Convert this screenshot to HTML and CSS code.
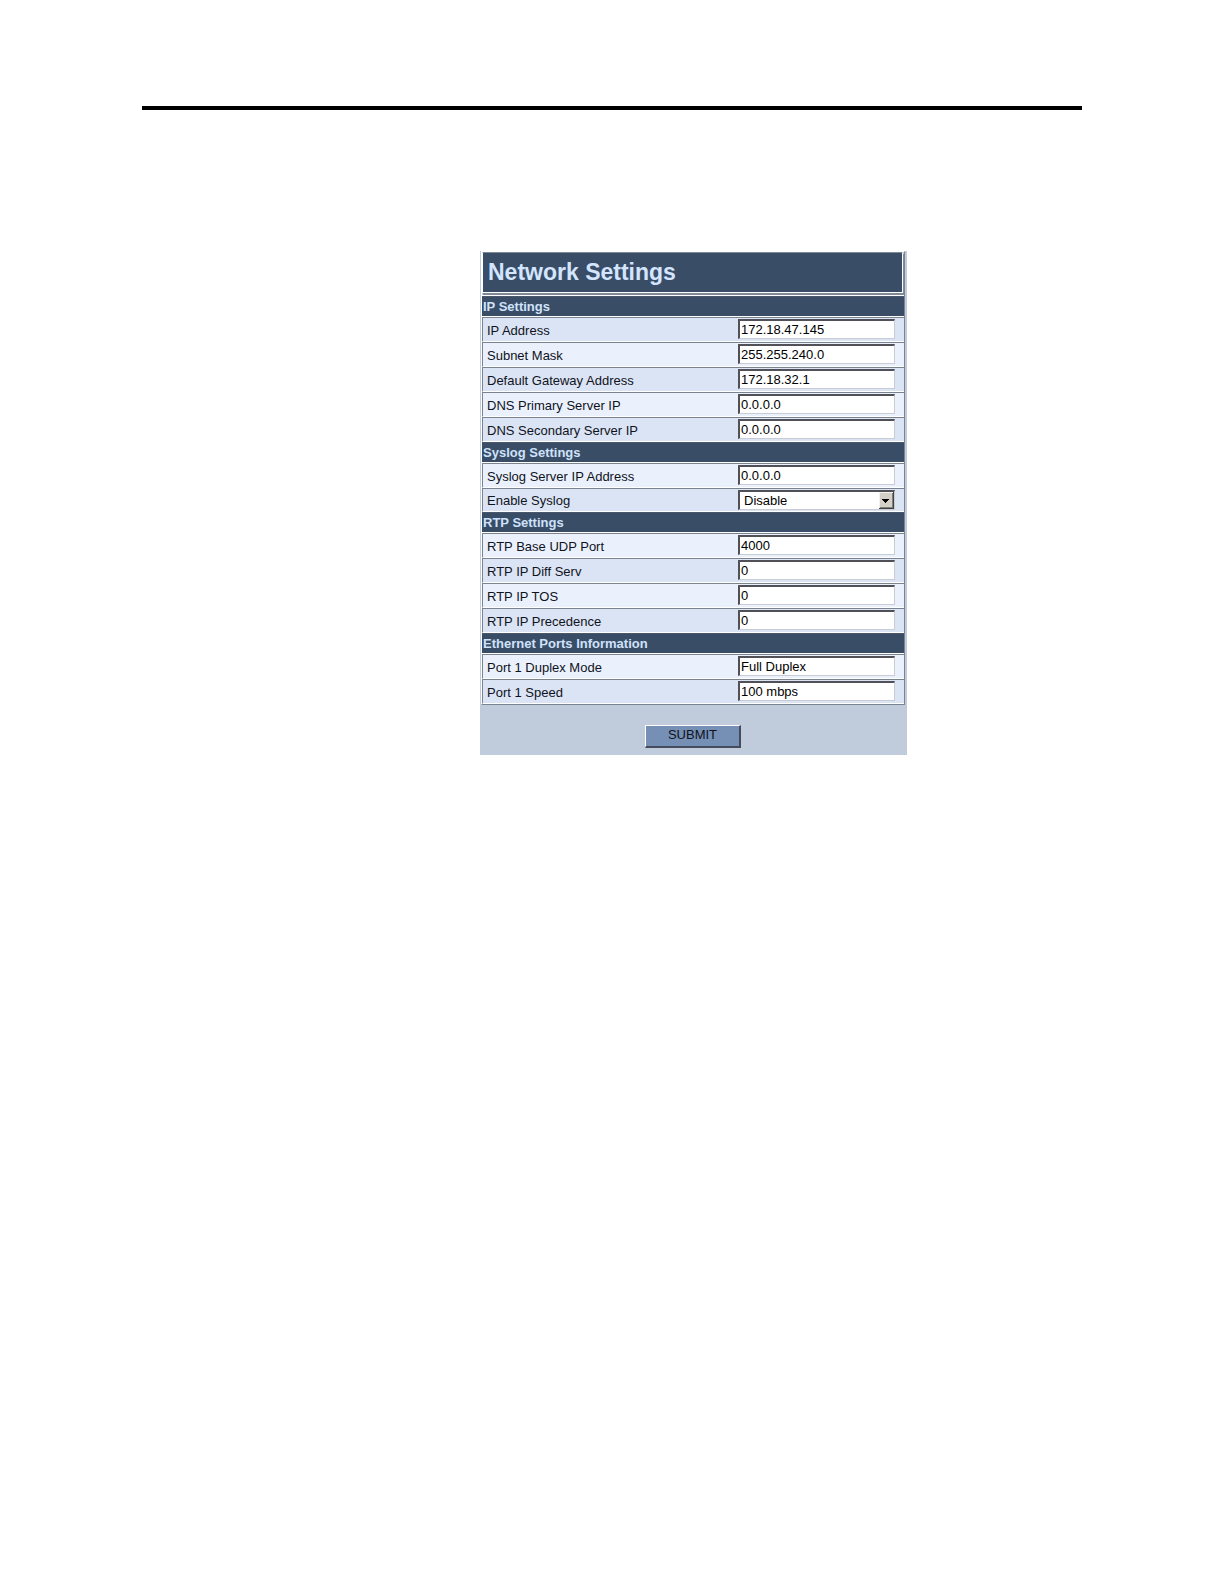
FILE: index.html
```html
<!DOCTYPE html>
<html lang="en">
<head>
<meta charset="utf-8">
<title>Network Settings</title>
<meta name="viewport" content="width=device-width, initial-scale=1">
<link rel="stylesheet" href="styles.css">
</head>
<body>
<main class="page">
  <hr class="rule">
  <form class="panel">
    <div class="frame">
    <h1 class="title">Network Settings</h1>
    <table class="settings">
      <colgroup><col class="col-label"><col></colgroup>
      <tbody>
        <tr class="section"><th colspan="2">IP Settings</th></tr>
        <tr class="tinted"><td><label for="ip">IP Address</label></td><td><input id="ip" type="text" value="172.18.47.145"></td></tr>
        <tr><td><label for="mask">Subnet Mask</label></td><td><input id="mask" type="text" value="255.255.240.0"></td></tr>
        <tr class="tinted"><td><label for="gateway">Default Gateway Address</label></td><td><input id="gateway" type="text" value="172.18.32.1"></td></tr>
        <tr><td><label for="dns1">DNS Primary Server IP</label></td><td><input id="dns1" type="text" value="0.0.0.0"></td></tr>
        <tr class="tinted"><td><label for="dns2">DNS Secondary Server IP</label></td><td><input id="dns2" type="text" value="0.0.0.0"></td></tr>
      </tbody>
      <tbody>
        <tr class="section"><th colspan="2">Syslog Settings</th></tr>
        <tr><td><label for="syslog-ip">Syslog Server IP Address</label></td><td><input id="syslog-ip" type="text" value="0.0.0.0"></td></tr>
        <tr class="tinted compact"><td><label for="syslog">Enable Syslog</label></td><td>
          <div class="dropdown">
            <select id="syslog"><option>Disable</option><option>Enable</option></select>
            <svg class="arrow" width="15" height="17" viewBox="0 0 15 17" aria-hidden="true" shape-rendering="crispEdges">
              <path fill="#d4d0c8" d="M0 0h15v17H0z"/>
              <path fill="none" stroke="#f4f2ee" d="M.5 16V.5H14"/>
              <path fill="none" stroke="#404040" d="M0 16.5h14.5V0"/>
              <path fill="none" stroke="#808080" d="M1 15.5h12.5V1"/>
              <path fill="#000" d="M3 7h7v1H3zM4 8h5v1H4zM5 9h3v1H5zM6 10h1v1H6z"/>
            </svg>
          </div></td></tr>
      </tbody>
      <tbody>
        <tr class="section"><th colspan="2">RTP Settings</th></tr>
        <tr><td><label for="udp">RTP Base UDP Port</label></td><td><input id="udp" type="text" value="4000"></td></tr>
        <tr class="tinted"><td><label for="diff">RTP IP Diff Serv</label></td><td><input id="diff" type="text" value="0"></td></tr>
        <tr><td><label for="tos">RTP IP TOS</label></td><td><input id="tos" type="text" value="0"></td></tr>
        <tr class="tinted"><td><label for="prec">RTP IP Precedence</label></td><td><input id="prec" type="text" value="0"></td></tr>
      </tbody>
      <tbody>
        <tr class="section"><th colspan="2">Ethernet Ports Information</th></tr>
        <tr><td><label for="duplex">Port 1 Duplex Mode</label></td><td><input id="duplex" type="text" value="Full Duplex"></td></tr>
        <tr class="tinted"><td><label for="speed">Port 1 Speed</label></td><td><input id="speed" type="text" value="100 mbps"></td></tr>
      </tbody>
    </table>
    </div>
    <div class="actions"><button type="submit" class="submit">SUBMIT</button></div>
  </form>
</main>
</body>
</html>
```
FILE: styles.css
```css
* {
  box-sizing: border-box;
}

body {
  margin: 0;
  background: #fff;
  color: #10131c;
  font: 13px/16px "Liberation Sans", Arial, sans-serif;
}

.page {
  padding: 106px 142px;
}

.rule {
  height: 4px;
  margin: 0 0 141px;
  border: 0;
  background: #000;
}

.panel {
  max-width: 427px;
  margin-left: 338px;
  padding: 0 2px 0 1px;
  background: #c0cbdc;
}

.frame {
  border: 1px solid #fff;
  border-right-color: #7b838f;
  border-bottom-color: #7b838f;
}

.title {
  margin: 0 1px 0 0;
  padding: 5px 5px 6px;
  border: 1px solid #fff;
  border-top-color: #7f8a94;
  background: #3a4d66;
  box-shadow: 1px 2px #7f8a94;
  color: #d3e5ff;
  font-size: 23px;
  line-height: 28px;
}

.settings {
  width: 100%;
  margin-top: 2px;
  border-top: 1px solid #fff;
  border-collapse: separate;
  border-spacing: 0;
  table-layout: fixed;
}

.col-label {
  width: 256px;
}

.settings td,
.settings th {
  border-top: 1px solid #7b838f;
  border-bottom: 1px solid #fff;
}

.settings td {
  height: 25px;
  padding: 1px 0 2px;
  background: #eaf1fd;
}

.settings td:first-child {
  padding: 2px 0 0 4px;
  border-left: 1px solid #7b838f;
}

.settings .tinted td {
  background: #dbe4f4;
}

.settings .compact td {
  height: 24px;
  padding-bottom: 1px;
}

.section th {
  height: 21px;
  padding: 1px 1px 0;
  border-color: #4b586c #fff #fff;
  background: #3a4d66;
  color: #cfe2fc;
  font-size: 13px;
  text-align: left;
}

.settings input,
.dropdown {
  display: block;
  width: 157px;
  height: 20px;
  border: 2px solid #404040;
  border-color: #505056 #c9cdd3 #c9cdd3 #505056;
  border-width: 2px 1px 1px 2px;
  border-radius: 0;
  background: #fff;
}

.settings input {
  padding: 0 1px;
  color: #000;
  font: inherit;
}

.dropdown {
  display: grid;
  grid-template-columns: 1fr 15px;
}

.dropdown select {
  grid-area: 1 / 1 / 2 / 3;
  width: 100%;
  height: 17px;
  padding: 0 4px;
  border: 0;
  appearance: none;
  background: #fff;
  color: #000;
  font: inherit;
}

.arrow {
  grid-area: 1 / 2;
  pointer-events: none;
}

.actions {
  padding: 20px 0 7px;
  text-align: center;
}

.submit {
  display: inline-block;
  width: 96px;
  height: 23px;
  padding: 0 0 2px;
  border: 1px solid;
  border-color: #fff #444b5c #444b5c #fff;
  border-width: 1px 2px 2px 1px;
  border-radius: 0;
  background: #768fb5;
  color: #10131c;
  font: inherit;
  vertical-align: top;
}
```
